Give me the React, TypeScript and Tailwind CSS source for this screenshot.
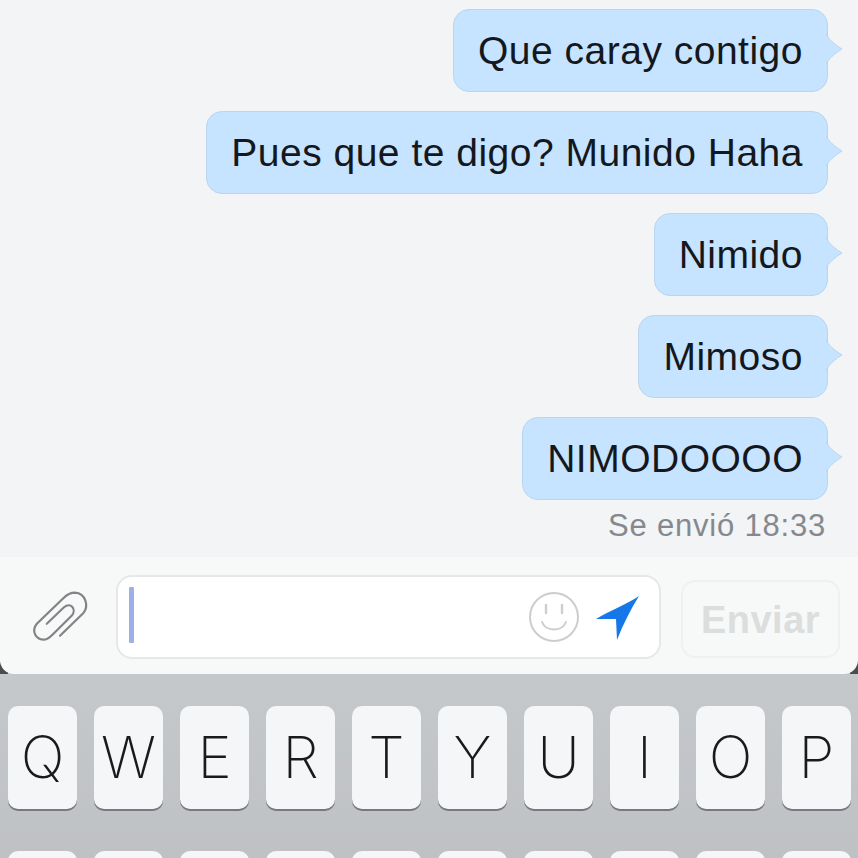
const MESSAGES = ["Que caray contigo", "Pues que te digo? Munido Haha", "Nimido", "Mimoso", "NIMODOOOO"];
const TOP_ROW = ["Q", "W", "E", "R", "T", "Y", "U", "I", "O", "P"];
// only the tops of the second row fit on screen
const SECOND_ROW = [0, 1, 2, 3, 4, 5, 6, 7, 8, 9];

function Bubble({ text }: { text: string }) {
  return (
    <div className="relative self-end mr-[30px] h-[83px] rounded-[16px] border border-[#b9d6f0] bg-[#c6e3ff] px-[24px] flex items-center text-[39px] tracking-[0.5px] leading-none text-[#14181c]">
      {text}
      {/* tail */}
      <svg className="absolute left-full top-[23px] -ml-px" width="17" height="32" viewBox="0 0 17 32">
        <path d="M0 0 C2 6 8 11 16 16 C8 21 2 26 0 32 Z" fill="#c6e3ff" />
        <path d="M0 0 C2 6 8 11 16 16 C8 21 2 26 0 32" fill="none" stroke="#b9d6f0" strokeWidth="1" />
      </svg>
    </div>
  );
}

function PaperClip() {
  return (
    <svg width="60" height="53" viewBox="90 120 180 160" fill="none" stroke="#818386" strokeWidth="6.5" strokeLinecap="round">
      <path d="M180 258 L250 190 C268 170 258 130 225 128 C210 128 200 135 190 145 L110 222 C92 245 108 270 130 270 C142 270 150 262 158 254 L215 198 C232 178 212 155 192 172 L140 222" />
    </svg>
  );
}

export default function App() {
  return (
    <div className="h-[858px] overflow-hidden flex flex-col bg-[#f2f4f6] font-['Liberation_Sans',Arial,sans-serif]">
      {/* conversation */}
      <div className="h-[557px] shrink-0 flex flex-col pt-[9px] gap-[19px]">
        {MESSAGES.map((m) => (
          <Bubble key={m} text={m} />
        ))}
        <div className="self-end mr-[32px] -mt-[9px] text-[31px] leading-[32px] tracking-[0.8px] text-[#85898e]">
          Se envió 18:33
        </div>
      </div>

      {/* composer */}
      <div className="h-[117px] shrink-0 flex items-start bg-[#f7f8f8] pl-[30px] pr-[19px] pt-[18px] relative z-10 rounded-b-[14px]">
        <div className="w-[86px] shrink-0 pt-[15px]">
          <PaperClip />
        </div>
        <div className="w-[545px] h-[84px] shrink-0 rounded-[16px] border-2 border-[#e6e7e9] bg-white flex items-center pl-[11px] pr-[18px]">
          <div className="w-[5px] h-[56px] -mt-[5px] bg-[#9db1e8] rounded-[1px]" />
          <svg className="ml-auto" width="52" height="52" viewBox="0 0 52 52" fill="none" stroke="#cbcdce" strokeWidth="2">
            <circle cx="26" cy="26" r="24" />
            <path d="M14 31 C18 41 34 41 38 31" strokeLinecap="round" />
            <path d="M18 14 V22 M34 14 V22" strokeWidth="2.4" strokeLinecap="round" />
          </svg>
          <svg className="ml-[15px]" width="46" height="46" viewBox="0 0 46 46">
            <path d="M1 25 C16 16 32 10 44 2 C36 15 28 30 22 46 L21 25 Z" fill="#1677e8" />
          </svg>
        </div>
        <div className="ml-[20px] mt-[5px] w-[159px] h-[78px] shrink-0 rounded-[14px] border-2 border-[#eff0f1] flex items-center justify-center pt-[2px] text-[38px] font-bold tracking-[0.5px] text-[#dcdddd]">
          Enviar
        </div>
      </div>

      {/* keyboard */}
      <div className="relative flex-1 -mt-[14px] pt-[46px] bg-gradient-to-b from-[#c6c9cc] to-[#bbbdc1] flex flex-col gap-[42px]">
        <div className="absolute left-0 top-[2px] w-[8px] h-[12px] bg-[#4a4c4e]" />
        <div className="absolute right-0 top-[2px] w-[8px] h-[12px] bg-[#4a4c4e]" />
        <div className="flex gap-[17px] pl-[8px]">
          {TOP_ROW.map((k) => (
            <div
              key={k}
              className="w-[69px] h-[103px] shrink-0 rounded-[10px] bg-[#f5f6f7] shadow-[0_2px_0_#77797d] flex items-center justify-center text-[58px] font-extralight font-['Inter',sans-serif] text-[#1a1a1c]"
            >
              {k}
            </div>
          ))}
        </div>
        <div className="flex gap-[17px] pl-[8px]">
          {SECOND_ROW.map((n) => (
            <div key={n} className="w-[69px] h-[103px] shrink-0 rounded-[10px] bg-[#f5f6f7]" />
          ))}
        </div>
      </div>
    </div>
  );
}
